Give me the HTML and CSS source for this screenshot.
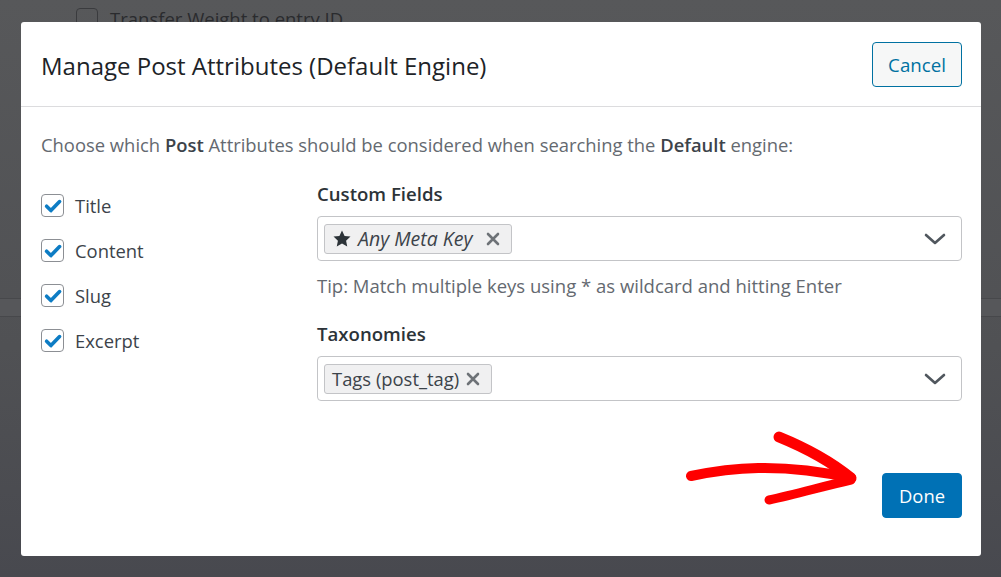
FILE: index.html
```html
<!DOCTYPE html>
<html lang="en">
<head>
<meta charset="utf-8">
<title>Manage Post Attributes</title>
<link rel="stylesheet" href="styles.css">
</head>
<body>
<div class="page">
  <div class="bg-row">
    <span class="bg-check"></span>
    <span class="bg-label">Transfer Weight to entry ID</span>
  </div>
  <div class="bg-band"></div>
</div>

<div class="modal">
  <div class="modal-header">
    <h2 class="modal-title">Manage Post Attributes (Default Engine)</h2>
    <button class="btn btn-secondary">Cancel</button>
  </div>
  <div class="modal-body">
    <p class="intro">Choose which <strong>Post</strong> Attributes should be considered when searching the <strong>Default</strong> engine:</p>
    <div class="columns">
      <ul class="checks">
        <li class="check-row"><span class="checkbox"><svg viewBox="0 0 20 20" width="20" height="20"><path d="M3.6 10.2 L7.9 14.6 L16.6 5.6" fill="none" stroke="#0d7cc4" stroke-width="3.6" stroke-linecap="round" stroke-linejoin="round"/></svg></span><span class="check-label">Title</span></li>
        <li class="check-row"><span class="checkbox"><svg viewBox="0 0 20 20" width="20" height="20"><path d="M3.6 10.2 L7.9 14.6 L16.6 5.6" fill="none" stroke="#0d7cc4" stroke-width="3.6" stroke-linecap="round" stroke-linejoin="round"/></svg></span><span class="check-label">Content</span></li>
        <li class="check-row"><span class="checkbox"><svg viewBox="0 0 20 20" width="20" height="20"><path d="M3.6 10.2 L7.9 14.6 L16.6 5.6" fill="none" stroke="#0d7cc4" stroke-width="3.6" stroke-linecap="round" stroke-linejoin="round"/></svg></span><span class="check-label">Slug</span></li>
        <li class="check-row"><span class="checkbox"><svg viewBox="0 0 20 20" width="20" height="20"><path d="M3.6 10.2 L7.9 14.6 L16.6 5.6" fill="none" stroke="#0d7cc4" stroke-width="3.6" stroke-linecap="round" stroke-linejoin="round"/></svg></span><span class="check-label">Excerpt</span></li>
      </ul>
      <div class="fields">
        <div class="field-label">Custom Fields</div>
        <div class="select">
          <span class="chip">
            <svg class="star" viewBox="0 0 24 24" width="20" height="20"><path d="M12 1.8 L15.1 8.3 L22.2 9.1 L16.9 14 L18.3 21.1 L12 17.5 L5.7 21.1 L7.1 14 L1.8 9.1 L8.9 8.3 Z" fill="#2c3338"/></svg>
            <em class="chip-text">Any Meta Key</em>
            <svg class="x" viewBox="0 0 14 14" width="14" height="14"><path d="M2 2 L12 12 M12 2 L2 12" stroke="#6e7277" stroke-width="2.6" stroke-linecap="round"/></svg>
          </span>
          <svg class="chev" viewBox="0 0 22 12" width="22" height="12"><path d="M2 2 L11 10 L20 2" fill="none" stroke="#50575e" stroke-width="2.6" stroke-linecap="round" stroke-linejoin="round"/></svg>
        </div>
        <div class="tip">Tip: Match multiple keys using * as wildcard and hitting Enter</div>
        <div class="field-label second">Taxonomies</div>
        <div class="select">
          <span class="chip">
            <span class="chip-text plain">Tags (post_tag)</span>
            <svg class="x" viewBox="0 0 14 14" width="14" height="14"><path d="M2 2 L12 12 M12 2 L2 12" stroke="#6e7277" stroke-width="2.6" stroke-linecap="round"/></svg>
          </span>
          <svg class="chev" viewBox="0 0 22 12" width="22" height="12"><path d="M2 2 L11 10 L20 2" fill="none" stroke="#50575e" stroke-width="2.6" stroke-linecap="round" stroke-linejoin="round"/></svg>
        </div>
      </div>
    </div>
  </div>
  <div class="modal-footer">
    <button class="btn btn-primary">Done</button>
  </div>
  <svg class="arrow" viewBox="0 0 200 90" width="200" height="90">
    <path d="M12 56 C 50 48, 100 42, 172 58" fill="none" stroke="#ff0000" stroke-width="10" stroke-linecap="round"/>
    <path d="M100 17 C 127 28, 150 40, 172 58" fill="none" stroke="#ff0000" stroke-width="11" stroke-linecap="round"/>
    <path d="M90 80 C 118 74, 145 66, 172 60" fill="none" stroke="#ff0000" stroke-width="9" stroke-linecap="round"/>
  </svg>
</div>
</body>
</html>
```

FILE: styles.css
```css
* { box-sizing: border-box; }
html, body { margin: 0; padding: 0; }
body {
  width: 1001px;
  height: 577px;
  overflow: hidden;
  background: linear-gradient(180deg, #57585a 0%, #505154 60%, #48494f 100%);
  font-family: "Open Sans", "Noto Sans", sans-serif;
  position: relative;
}
.page { height: 577px; }
.bg-row {
  display: flex;
  align-items: center;
  gap: 12px;
  padding: 7px 0 0 76px;
  height: 29px;
}
.bg-check {
  width: 22px;
  height: 21px;
  border: 1px solid #3a3b3e;
  border-radius: 4px;
}
.bg-label {
  font-size: 18.5px;
  color: #2a2b2e;
}
.bg-band {
  margin-top: 269px;
  height: 19px;
  border-top: 1px solid #47484b;
  border-bottom: 1px solid #47484b;
  background: #56575a;
}

.modal {
  position: absolute;
  left: 21px;
  top: 22px;
  width: 960px;
  height: 534px;
  background: #fff;
  border-radius: 3px;
  display: flex;
  flex-direction: column;
}
.modal-header {
  height: 85px;
  padding: 0 19px 0 20px;
  display: flex;
  align-items: center;
  justify-content: space-between;
  border-bottom: 1px solid #dcdcde;
}
.modal-title {
  margin: 2px 0 0 0;
  font-size: 24px;
  font-weight: 400;
  color: #1d2327;
}
.btn {
  font-family: inherit;
  font-size: 18.7px;
  border-radius: 4px;
  height: 45px;
  padding: 0;
  cursor: pointer;
}
.btn-secondary {
  width: 90px;
  background: #f6f7f7;
  border: 1px solid #0071a1;
  color: #0071a1;
}
.btn-primary {
  width: 80px;
  background: #0071b5;
  border: 1px solid #0071b5;
  color: #fff;
  font-size: 18.4px;
}
.modal-body {
  padding: 25px 19px 0 20px;
}
.intro {
  margin: 0;
  font-size: 18.4px;
  line-height: 26px;
  color: #646970;
}
.intro strong { color: #3c434a; font-weight: 600; }
.columns {
  display: grid;
  grid-template-columns: 276px 1fr;
  margin-top: 23px;
}
.checks {
  list-style: none;
  margin: 0;
  padding: 2px 0 0 0;
}
.check-row {
  height: 45px;
  display: flex;
  align-items: center;
  gap: 11px;
}
.checkbox {
  width: 23px;
  height: 23px;
  border: 1px solid #8c8f94;
  border-radius: 4px;
  display: flex;
  align-items: center;
  justify-content: center;
  background: #fff;
}
.check-label {
  font-size: 18.4px;
  color: #3c434a;
}
.field-label {
  font-size: 18.6px;
  font-weight: 600;
  line-height: 26px;
  color: #2c3338;
}
.field-label.second { margin-top: 22px; }
.select {
  margin-top: 9px;
  height: 45px;
  border: 1px solid #c3c4c7;
  border-radius: 4px;
  display: flex;
  align-items: center;
  justify-content: space-between;
  padding: 0 15px 0 6px;
}
.chip {
  height: 30px;
  display: inline-flex;
  align-items: center;
  gap: 6px;
  padding: 0 11px 0 7px;
  background: #f0f0f1;
  border: 1px solid #c3c4c7;
  border-radius: 3px;
}
.chip-text {
  font-size: 19.5px;
  color: #3c434a;
  margin-right: 8px;
}
.chip-text.plain { font-size: 18.4px; margin-right: 1px; }
.tip {
  margin-top: 12px;
  font-size: 18.5px;
  line-height: 26px;
  color: #646970;
}
.modal-footer {
  margin-top: auto;
  padding: 0 19px 38px 0;
  display: flex;
  justify-content: flex-end;
}
.arrow {
  position: absolute;
  left: 658px;
  top: 398px;
}
```
